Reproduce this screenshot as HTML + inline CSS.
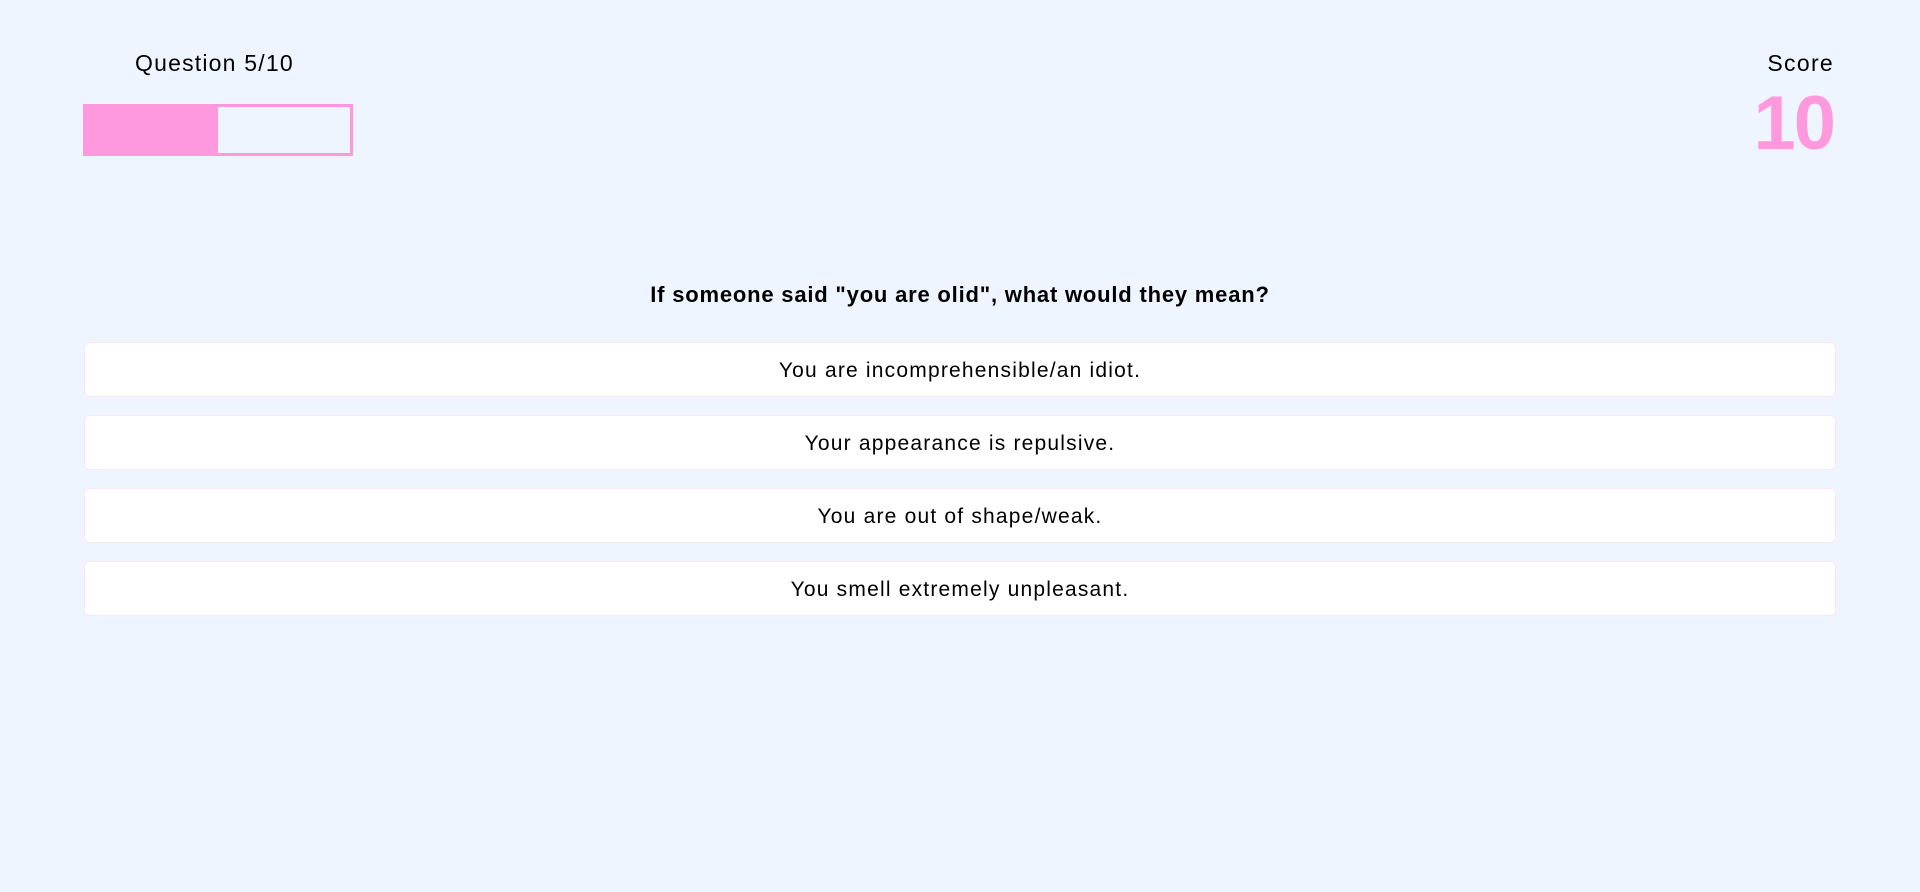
<!DOCTYPE html>
<html><head><meta charset="utf-8"><style>
html,body{margin:0;padding:0;}
body{width:1920px;height:892px;background:#eef5ff;font-family:"Liberation Sans",sans-serif;color:#000;position:relative;overflow:hidden;}
.qn{position:absolute;left:135px;top:50px;font-size:23px;letter-spacing:1.2px;}
.bar{position:absolute;left:83px;top:104px;width:264px;height:46px;border:3px solid #ff99dd;background:#eef5ff;}
.fill{position:absolute;left:0;top:0;width:132px;height:46px;background:#ff99dd;}
.sl{position:absolute;right:86px;top:50px;font-size:23px;letter-spacing:1.3px;}
.sv{position:absolute;right:86px;top:84px;font-size:76px;font-weight:bold;color:#ff99dd;line-height:80px;letter-spacing:-2px;}
.q{position:absolute;left:0;width:1920px;top:282px;text-align:center;font-size:22px;font-weight:bold;letter-spacing:0.8px;}
.opt{position:absolute;left:84px;width:1752px;height:55px;background:#fff;border:1px solid #fde6f3;border-radius:6px;box-sizing:border-box;text-align:center;line-height:55px;font-size:21px;letter-spacing:1.2px;}
</style></head><body>
<div class="qn">Question 5/10</div>
<div class="bar"><div class="fill"></div></div>
<div class="sl">Score</div>
<div class="sv">10</div>
<div class="q">If someone said "you are olid", what would they mean?</div>
<div class="opt" style="top:342px">You are incomprehensible/an idiot.</div>
<div class="opt" style="top:415px">Your appearance is repulsive.</div>
<div class="opt" style="top:488px">You are out of shape/weak.</div>
<div class="opt" style="top:561px">You smell extremely unpleasant.</div>
</body></html>
